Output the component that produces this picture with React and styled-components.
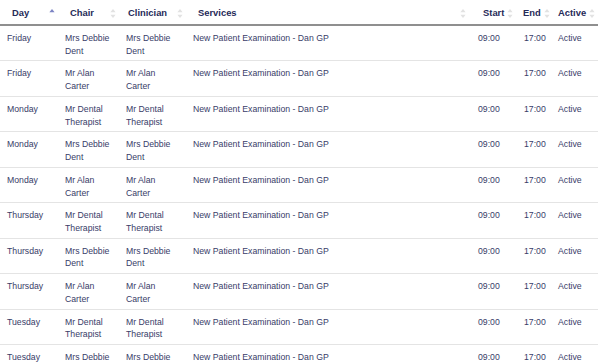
import React from 'react';
import styled, { createGlobalStyle } from 'styled-components';

const GlobalStyle = createGlobalStyle`
  html, body {
    margin: 0;
    padding: 0;
    overflow: hidden;
    background: #fff;
  }
  body {
    font-family: "Liberation Sans", Arial, sans-serif;
  }
`;

const Table = styled.table`
  border-collapse: collapse;
  table-layout: fixed;
  width: 602px;
  font-size: 8.7px;
  line-height: 12.7px;
`;

const Th = styled.th`
  text-align: left;
  font-weight: bold;
  font-size: 9.4px;
  color: #262a58;
  padding: 7px ${props => props.padRight}px 4px ${props => props.padLeft}px;
  border-bottom: 2px solid #8f8f8f;
  height: 13px;
`;

const HeadInner = styled.div`
  display: flex;
  align-items: center;
  justify-content: ${props => (props.tight ? 'flex-start' : 'space-between')};
  gap: 3px;
  white-space: nowrap;
`;

const Td = styled.td`
  vertical-align: top;
  white-space: nowrap;
  color: #383c68;
  padding: 6px 7px 3.05px 7px;
  border-bottom: 1px solid #e4e4e4;
  height: 25.4px;
`;

const SortIcon = ({ dir }) => (
  <svg width="6" height="11" viewBox="0 0 6 11" style={{ flex: 'none' }}>
    <polygon points="3,1 5.6,4.2 0.4,4.2" fill={dir === 'asc' ? '#7c84c4' : '#e2e2e2'} />
    {dir !== 'asc' && <polygon points="0.4,6.8 5.6,6.8 3,10" fill="#e2e2e2" />}
  </svg>
);

const columns = [
  { key: 'day', label: 'Day', width: 58, left: 12, pad: 3, dir: 'asc' },
  { key: 'chair', label: 'Chair', width: 61, left: 12, pad: 3 },
  { key: 'clin', label: 'Clinician', width: 67, left: 9, pad: 3 },
  { key: 'svc', label: 'Services', width: 285, left: 12, pad: 5 },
  { key: 'start', label: 'Start', width: 46, left: 12, pad: 0, tight: true },
  { key: 'end', label: 'End', width: 34, left: 6, pad: 0, tight: true },
  { key: 'active', label: 'Active', width: 51, left: 7, pad: 0, tight: true },
];

const people = {
  debbie: ['Mrs Debbie', 'Dent'],
  alan: ['Mr Alan', 'Carter'],
  dental: ['Mr Dental', 'Therapist'],
};

const rows = [
  ['Friday', 'debbie'],
  ['Friday', 'alan'],
  ['Monday', 'dental'],
  ['Monday', 'debbie'],
  ['Monday', 'alan'],
  ['Thursday', 'dental'],
  ['Thursday', 'debbie'],
  ['Thursday', 'alan'],
  ['Tuesday', 'dental'],
  ['Tuesday', 'debbie'],
];

const Name = ({ who }) => (
  <>
    {people[who][0]}
    <br />
    {people[who][1]}
  </>
);

export default function App() {
  return (
    <>
      <GlobalStyle />
      <Table>
        <colgroup>
          {columns.map(c => (
            <col key={c.key} style={{ width: c.width }} />
          ))}
        </colgroup>
        <thead>
          <tr>
            {columns.map(c => (
              <Th key={c.key} padLeft={c.left} padRight={c.pad}>
                <HeadInner tight={c.tight}>
                  <span>{c.label}</span>
                  <SortIcon dir={c.dir} />
                </HeadInner>
              </Th>
            ))}
          </tr>
        </thead>
        <tbody>
          {rows.map(([day, who], i) => (
            <tr key={i}>
              <Td>{day}</Td>
              <Td><Name who={who} /></Td>
              <Td><Name who={who} /></Td>
              <Td>New Patient Examination - Dan GP</Td>
              <Td>09:00</Td>
              <Td>17:00</Td>
              <Td>Active</Td>
            </tr>
          ))}
        </tbody>
      </Table>
    </>
  );
}
